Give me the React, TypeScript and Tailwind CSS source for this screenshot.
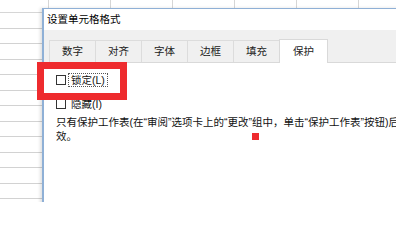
import React from "react";

const font = { fontFamily: '"Liberation Sans", "Noto Sans CJK SC", sans-serif' };

const tabs = ["数字", "对齐", "字体", "边框", "填充", "保护"];

const Sheet = () => {
  const rows = Array.from({ length: 13 });
  return <div className="flex flex-col">
      <div className="h-[13px] border-b border-[#d6d6d6] flex">
        {[49, 62, 62, 62, 62, 62, 62].map((w, i) => <div key={i} className="h-full border-r border-[#d6d6d6] shrink-0" style={{
        width: w
      }} />)}
      </div>
      {rows.map((_, i) => <div key={i} className="h-[15.5px] border-b border-[#d2d2d2]" />)}
    </div>;
};

const Checkbox = ({ label, focused }: { label: string; focused?: boolean }) => <div className="flex items-center h-[14px]">
    <div className="w-[10px] h-[10px] border border-[#333333] bg-white shrink-0" />
    <span className={`ml-[3px] px-[2px] leading-[12px] text-[10.5px] text-[#111] ${focused ? "outline outline-1 outline-dotted outline-[#555]" : ""}`}>
      {label}
    </span>
  </div>;

export default function App() {
  return <div className="relative w-[396px] h-[202px] overflow-hidden bg-white" style={font}>
      <Sheet />
      <div className="absolute left-[42px] top-[8px] w-[600px] h-[300px] flex flex-col bg-white border-l-2 border-t border-[#8fb0d6] shadow-[-2px_0_3px_rgba(0,0,0,0.12)]">
        <div className="h-[21px] flex items-center pl-[3px] text-[10.5px] text-black">
          设置单元格格式
        </div>
        <div className="h-[33px] bg-[#f0f0f0] flex items-end pl-[5px] border-b border-[#d9d9d9]">
          {tabs.map((t, i) => i === 5 ? <div key={t} className="w-[49px] h-[24px] -mb-[1px] bg-white border border-b-0 border-[#d9d9d9] flex items-center justify-center text-[10.5px] text-[#222]">
                {t}
              </div> : <div key={t} className="w-[46px] h-[22px] border-t border-l border-[#dcdcdc] flex items-center justify-center text-[10.5px] text-[#222]">
                {t}
              </div>)}
        </div>
        <div className="flex-1 bg-white pl-[12px] pt-[10px]">
          <Checkbox label="锁定(L)" focused />
          <div className="h-[10px]" />
          <Checkbox label="隐藏(I)" />
          <p className="mt-[4px] text-[10.5px] leading-[14px] text-[#111] whitespace-nowrap">
            只有保护工作表(在“审阅”选项卡上的“更改”组中，单击“保护工作表”按钮)后，锁定单元格或隐藏公式才有
            <br />
            效。
          </p>
        </div>
      </div>
      <div className="absolute left-[37px] top-[62px] w-[90px] h-[38px] border-[7px] border-[#ee2b2e]" />
      <div className="absolute left-[252px] top-[133px] w-[7px] h-[7px] bg-[#ee2b2e]" />
    </div>;
}
